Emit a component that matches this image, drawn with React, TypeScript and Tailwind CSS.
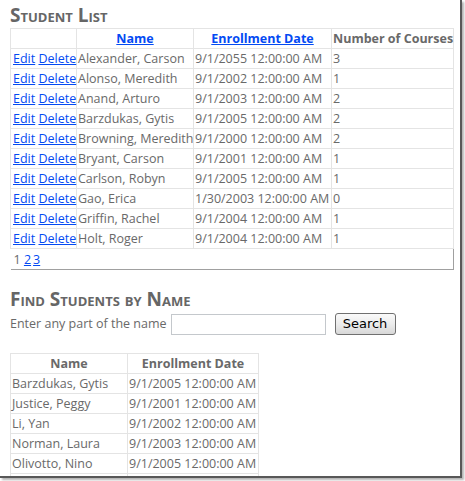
import React from 'react'

const students = [
  { name: 'Alexander, Carson', date: '9/1/2055 12:00:00 AM', courses: 3 },
  { name: 'Alonso, Meredith', date: '9/1/2002 12:00:00 AM', courses: 1 },
  { name: 'Anand, Arturo', date: '9/1/2003 12:00:00 AM', courses: 2 },
  { name: 'Barzdukas, Gytis', date: '9/1/2005 12:00:00 AM', courses: 2 },
  { name: 'Browning, Meredith', date: '9/1/2000 12:00:00 AM', courses: 2 },
  { name: 'Bryant, Carson', date: '9/1/2001 12:00:00 AM', courses: 1 },
  { name: 'Carlson, Robyn', date: '9/1/2005 12:00:00 AM', courses: 1 },
  { name: 'Gao, Erica', date: '1/30/2003 12:00:00 AM', courses: 0 },
  { name: 'Griffin, Rachel', date: '9/1/2004 12:00:00 AM', courses: 1 },
  { name: 'Holt, Roger', date: '9/1/2004 12:00:00 AM', courses: 1 },
]

const found = [
  { name: 'Barzdukas, Gytis', date: '9/1/2005 12:00:00 AM' },
  { name: 'Justice, Peggy', date: '9/1/2001 12:00:00 AM' },
  { name: 'Li, Yan', date: '9/1/2002 12:00:00 AM' },
  { name: 'Norman, Laura', date: '9/1/2003 12:00:00 AM' },
  { name: 'Olivotto, Nino', date: '9/1/2005 12:00:00 AM' },
]

const cell = 'border border-[#e4e4e4] h-[20px] px-[1px] pt-[1px] align-middle whitespace-nowrap'
const link = 'text-[#034af3] underline'

export default function App() {
  return (
    <div className="w-[465px] h-[481px] bg-white">
      <div
        className="w-[462px] h-[478px] overflow-hidden bg-white border-r-2 border-b-2 border-[#585858] shadow-[2px_2px_2px_rgba(0,0,0,0.3)] text-[12.5px] leading-[18px] text-[#696969]"
        style={{ fontFamily: '"Open Sans", "Noto Sans", sans-serif' }}
      >
        <div className="pl-[10px]">
          {/* student list */}
          <h2 className="text-[19px] leading-[22px] font-bold text-[#666] [font-variant:small-caps] pt-[4px] pb-[2px]">
            Student List
          </h2>
          <table className="border-collapse table-fixed w-[443px] border-r border-b border-r-[#a0a0a0] border-b-[#a0a0a0]">
            <colgroup>
              <col className="w-[66px]" />
              <col className="w-[117px]" />
              <col className="w-[138px]" />
              <col className="w-[122px]" />
            </colgroup>
            <thead>
              <tr>
                <th className={cell}></th>
                <th className={`${cell} text-center font-bold`}>
                  <a href="#" className={link}>Name</a>
                </th>
                <th className={`${cell} text-center font-bold`}>
                  <a href="#" className={link}>Enrollment Date</a>
                </th>
                <th className={`${cell} text-left font-bold`}>Number of Courses</th>
              </tr>
            </thead>
            <tbody>
              {students.map((s) => (
                <tr key={s.name}>
                  <td className={`${cell} pl-[2px]`}>
                    <a href="#" className={link}>Edit</a>{' '}
                    <a href="#" className={link}>Delete</a>
                  </td>
                  <td className={cell}>{s.name}</td>
                  <td className={cell}>{s.date}</td>
                  <td className={cell}>{s.courses}</td>
                </tr>
              ))}
              <tr>
                <td colSpan={4} className="h-[21px] pl-[3px] pt-[2px] align-middle">
                  <span>1</span>{' '}
                  <a href="#" className={link}>2</a>
                  <a href="#" className={`${link} ml-[2px]`}>3</a>
                </td>
              </tr>
            </tbody>
          </table>

          {/* search */}
          <h2 className="text-[19px] leading-[22px] font-bold text-[#666] [font-variant:small-caps] mt-[18px]">
            Find Students by Name
          </h2>
          <div className="flex items-center mt-[3px]">
            <span>Enter any part of the name</span>
            <input
              type="text"
              className="ml-[4px] w-[155px] h-[21px] border border-[#c4c8cc] bg-white outline-none"
            />
            <button
              type="button"
              className="ml-[9px] w-[61px] h-[22px] rounded-[3px] border border-[#707070] bg-gradient-to-b from-[#fafafa] via-[#ececec] to-[#d8d8d8] text-[13px] text-black leading-[18px]"
              style={{ fontFamily: '"DejaVu Sans", "Liberation Sans", sans-serif' }}
            >
              Search
            </button>
          </div>

          <table className="border-collapse table-fixed w-[248px] mt-[18px] border-r border-r-[#a0a0a0]">
            <colgroup>
              <col className="w-[117px]" />
              <col className="w-[131px]" />
            </colgroup>
            <thead>
              <tr>
                <th className={`${cell} text-center font-bold`}>Name</th>
                <th className={`${cell} text-center font-bold`}>Enrollment Date</th>
              </tr>
            </thead>
            <tbody>
              {found.map((s) => (
                <tr key={s.name}>
                  <td className={cell}>{s.name}</td>
                  <td className={cell}>{s.date}</td>
                </tr>
              ))}
              <tr>
                <td className={cell}></td>
                <td className={cell}></td>
              </tr>
            </tbody>
          </table>
        </div>
      </div>
    </div>
  )
}
